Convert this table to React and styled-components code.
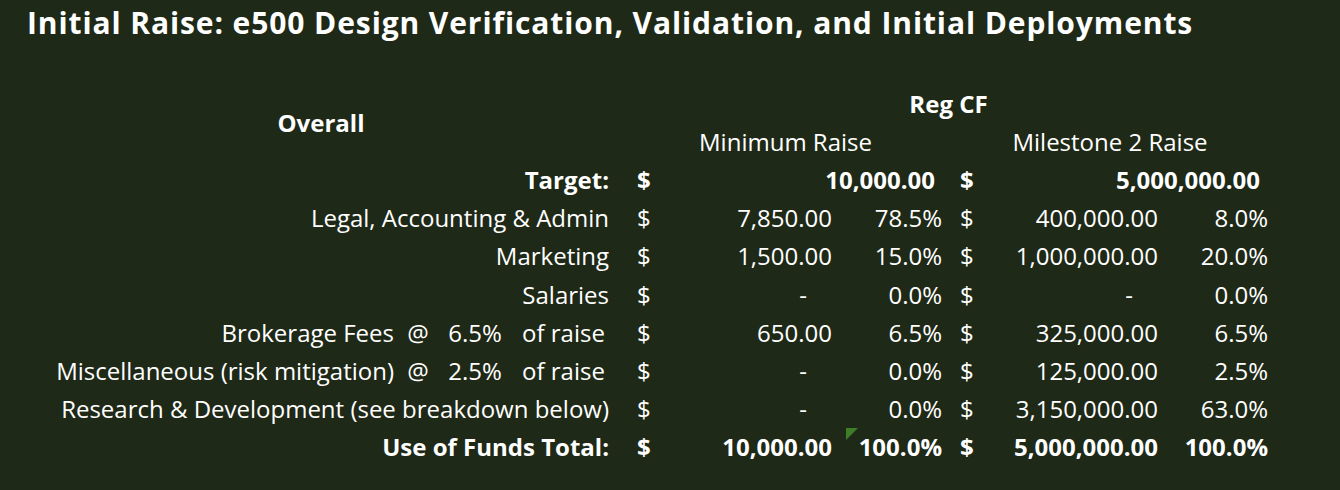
import React from 'react'
import styled, { createGlobalStyle } from 'styled-components'

const GlobalStyle = createGlobalStyle`
  body {
    margin: 0;
    background: #1f2917;
    color: #ffffff;
    font-family: "Open Sans", Lato, "Liberation Sans", sans-serif;
  }
`

const rows = [
  { label: 'Legal, Accounting & Admin', a: '7,850.00', ap: '78.5%', b: '400,000.00', bp: '8.0%' },
  { label: 'Marketing', a: '1,500.00', ap: '15.0%', b: '1,000,000.00', bp: '20.0%' },
  { label: 'Salaries', a: '-', ap: '0.0%', b: '-', bp: '0.0%' },
  { label: 'Brokerage Fees', rate: '6.5%', a: '650.00', ap: '6.5%', b: '325,000.00', bp: '6.5%' },
  { label: 'Miscellaneous (risk mitigation)', rate: '2.5%', a: '-', ap: '0.0%', b: '125,000.00', bp: '2.5%' },
  { label: 'Research & Development (see breakdown below)', a: '-', ap: '0.0%', b: '3,150,000.00', bp: '63.0%' },
]

const App = () => (
  <Page>
    <GlobalStyle />
    <Title>Initial Raise: e500 Design Verification, Validation, and Initial Deployments</Title>
    <Sheet>
      <Overall>Overall</Overall>
      <GroupHead>Reg CF</GroupHead>
      <SubHead $col="2 / 5" $shift={14}>Minimum Raise</SubHead>
      <SubHead $col="5 / 8" $shift={4}>Milestone 2 Raise</SubHead>

      <Label $bold>Target:</Label>
      <Dollar $bold>$</Dollar>
      <Amount $bold $span={2} $pad={10}>10,000.00</Amount>
      <Dollar $bold $second>$</Dollar>
      <Amount $bold $span={2} $pad={11}>5,000,000.00</Amount>

      {rows.map((r) => (
        <React.Fragment key={r.label}>
          {r.rate ? (
            <RateLabel>
              <RateText>{r.label}</RateText>
              <At>@</At>
              <Rate>{r.rate}</Rate>
              <OfRaise>of raise</OfRaise>
            </RateLabel>
          ) : (
            <Label>{r.label}</Label>
          )}
          <Dollar>$</Dollar>
          <Amount $pad={r.a === '-' ? 28 : 3}>{r.a}</Amount>
          <Amount>{r.ap}</Amount>
          <Dollar $second>$</Dollar>
          <Amount $pad={r.b === '-' ? 28 : 3}>{r.b}</Amount>
          <Amount>{r.bp}</Amount>
        </React.Fragment>
      ))}

      <Label $bold>Use of Funds Total:</Label>
      <Dollar $bold>$</Dollar>
      <Amount $bold>10,000.00</Amount>
      <Amount $bold $flag>100.0%</Amount>
      <Dollar $bold $second>$</Dollar>
      <Amount $bold>5,000,000.00</Amount>
      <Amount $bold>100.0%</Amount>
    </Sheet>
  </Page>
)

export default App

const Page = styled.div`
  width: 1340px;
  height: 490px;
  box-sizing: border-box;
  padding-top: 4px;
  overflow: hidden;
`

const Title = styled.h1`
  margin: 0 0 0 27px;
  font-size: 30px;
  font-weight: 700;
  letter-spacing: 0.9px;
  line-height: 38px;
  white-space: nowrap;
`

const Sheet = styled.div`
  display: grid;
  grid-template-columns: 612px 48px 175px 110px 40px 176px 110px;
  grid-auto-rows: 38.2px;
  margin-top: 42px;
  font-size: 24px;
`

const Cell = styled.div`
  display: flex;
  align-items: center;
  white-space: nowrap;
  font-weight: ${(p) => (p.$bold ? 700 : 400)};
`

const Overall = styled(Cell)`
  grid-row: span 2;
  justify-content: center;
  padding-left: 30px;
  font-weight: 700;
`

const GroupHead = styled(Cell)`
  grid-column: 2 / 8;
  justify-content: center;
  padding-left: 14px;
  font-weight: 700;
`

const SubHead = styled(Cell)`
  grid-column: ${(p) => p.$col};
  justify-content: center;
  padding-left: ${(p) => p.$shift}px;
`

const Label = styled(Cell)`
  grid-column: 1;
  justify-content: flex-end;
  padding-right: 3px;
`

const RateLabel = styled.div`
  grid-column: 1;
  display: grid;
  grid-template-columns: 400px 36px 76px 100px;
  align-items: center;
  white-space: nowrap;
`

const RateText = styled.span`
  text-align: right;
  padding-right: 6px;
`

const At = styled.span`
  text-align: center;
`

const Rate = styled.span`
  text-align: center;
  padding-left: 2px;
`

const OfRaise = styled.span`
  padding-left: 10px;
`

const Dollar = styled(Cell)`
  padding-left: ${(p) => (p.$second ? 15 : 25)}px;
`

const Amount = styled(Cell)`
  position: relative;
  grid-column: ${(p) => (p.$span ? `span ${p.$span}` : 'auto')};
  justify-content: flex-end;
  padding-right: ${(p) => p.$pad ?? 3}px;

  &::before {
    content: '';
    display: ${(p) => (p.$flag ? 'block' : 'none')};
    position: absolute;
    top: 0;
    left: 11px;
    border-top: 12px solid #3d7f26;
    border-right: 12px solid transparent;
  }
`
